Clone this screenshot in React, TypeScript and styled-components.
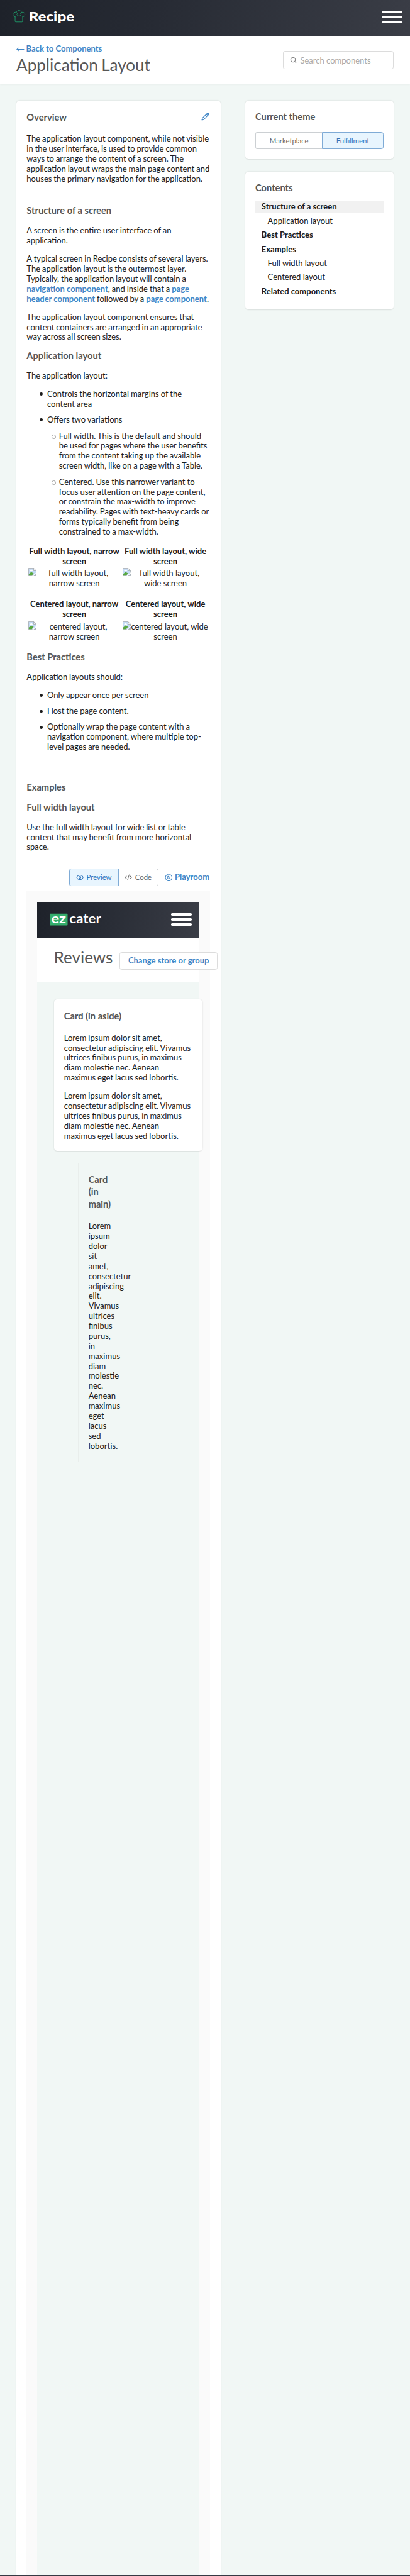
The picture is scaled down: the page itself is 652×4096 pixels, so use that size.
import React from "react";
import styled, { createGlobalStyle, css } from "styled-components";
import { Pencil, Search, Eye, CodeXml, CirclePlay, MoveLeft } from "lucide-react";

/* Converts design units to rem, so the whole page scales with the root font size. */
const u = (...values: number[]) => values.map((v) => `${v / 16}rem`).join(" ");

const color = {
  page: "#f1f7f5",
  text: "#1c1c1c",
  heading: "#575757",
  link: "#4187c7",
  line: "#e3e5e5",
  selectedBg: "#e8f5fe",
  selected: "#2f73b9",
};

const GlobalStyle = createGlobalStyle`
  html { font-size: 13.0315px; }
  * { box-sizing: border-box; }
  body {
    margin: 0;
    background: ${color.page};
    color: ${color.text};
    font-family: Lato, "Liberation Sans", sans-serif;
    font-size: ${u(16)};
    line-height: ${u(19.5)};
  }
`;

const Page = styled.div`
  height: 100vh;
  display: flex;
  flex-direction: column;
  overflow: hidden;
`;

const NavBar = styled.header`
  flex: none;
  height: ${u(70)};
  display: flex;
  align-items: center;
  justify-content: space-between;
  padding: ${u(0, 15, 0, 24)};
  background: linear-gradient(100deg, #1e222a 0%, #262a33 35%, #3a3d46 100%);
`;

const Brand = styled.svg`
  display: block;
  overflow: visible;
  height: ${u(34)};
  font-family: Lato, sans-serif;
`;

const Burger = styled.div`
  width: ${u(40)};
  height: ${u(25)};
  margin-top: ${u(-3)};
  display: flex;
  flex-direction: column;
  justify-content: space-between;
`;

const BurgerLine = styled.span`
  height: ${u(4.6)};
  border-radius: ${u(2)};
  background: #fff;
`;

const PageHeader = styled.div`
  flex: none;
  height: ${u(94)};
  padding: ${u(0, 32)};
  display: flex;
  justify-content: space-between;
  background: #fff;
  border-bottom: 1px solid ${color.line};
  box-shadow: 0 1px 2px rgba(0, 0, 0, 0.03);
`;

const BackLink = styled.a`
  display: flex;
  align-items: center;
  gap: ${u(3)};
  margin-top: ${u(16.3)};
  height: ${u(20)};
  font-weight: 700;
  white-space: nowrap;
  color: ${color.link};

  svg {
    width: ${u(16)};
    height: ${u(16)};
  }
`;

const Title = styled.h1`
  margin: 0;
  font-size: ${u(32)};
  line-height: ${u(40)};
  font-weight: 400;
  word-spacing: ${u(-1.5)};
  white-space: nowrap;
  color: ${color.heading};
`;

const SearchBox = styled.div`
  width: ${u(216)};
  height: ${u(35)};
  margin-top: ${u(30)};
  padding: ${u(2, 12, 0)};
  display: flex;
  align-items: center;
  gap: ${u(7)};
  border: 1px solid #dcdcdc;
  border-radius: ${u(4)};
  color: #aaa;

  svg {
    width: ${u(13.5)};
    height: ${u(13.5)};
    margin-top: ${u(-2)};
    color: #888;
  }
`;

const Content = styled.main`
  flex: 1;
  min-height: 0;
  display: flex;
  align-items: stretch;
  justify-content: space-between;
  padding: ${u(33, 32, 0)};
`;

const surface = css`
  background: #fff;
  border-radius: ${u(6)};
  box-shadow: 0 0 ${u(3)} rgba(0, 0, 0, 0.1), 0 ${u(1)} ${u(2)} rgba(0, 0, 0, 0.06);
`;

const Article = styled.article`
  ${surface}
  width: ${u(399)};
  border-radius: ${u(6, 6, 0, 0)};
  display: flex;
  flex-direction: column;
`;

const Section = styled.section<{ $height?: number }>`
  padding: ${u(20.5, 20, 0)};
  ${(p) =>
    p.$height
      ? css`
          flex: none;
          height: ${u(p.$height)};
          border-bottom: 1px solid ${color.line};
        `
      : css`
          flex: 1;
          min-height: 0;
          display: flex;
          flex-direction: column;
        `}
`;

const Sidebar = styled.aside`
  width: ${u(290)};
  display: flex;
  flex-direction: column;
  gap: ${u(24)};
`;

const SideCard = styled.section<{ $height: number }>`
  ${surface}
  height: ${(p) => u(p.$height)};
  padding: ${u(19.7, 20, 0)};
`;

const Heading = styled.h2<{ $top?: number; $bottom?: number }>`
  margin: ${(p) => u(p.$top ?? 0, 0, p.$bottom ?? 17)};
  font-size: ${u(18)};
  line-height: ${u(24.4)};
  font-weight: 700;
  color: ${color.heading};
`;

const HeadingRow = styled.div`
  display: flex;
  justify-content: space-between;
  margin-top: ${u(-0.6)};
  padding-right: ${u(2)};

  svg {
    width: ${u(16)};
    height: ${u(16)};
    margin-top: ${u(3)};
    color: ${color.link};
  }
`;

const Text = styled.p`
  margin: ${u(0, 0, 16)};
  word-spacing: ${u(-0.5)};
`;

const Link = styled.a`
  color: ${color.link};
  font-weight: 700;
  word-spacing: 0;
`;

const List = styled.ul<{ $nested?: boolean }>`
  margin: ${(p) => (p.$nested ? u(12, 0, 0) : 0)};
  padding: ${(p) => (p.$nested ? u(0, 0, 0, 23) : u(0, 0, 0, 40))};
  list-style: none;
  word-spacing: ${u(-0.4)};
`;

const Item = styled.li<{ $hollow?: boolean }>`
  position: relative;

  & + & {
    margin-top: ${u(11.7)};
  }

  &::before {
    content: "";
    position: absolute;
    left: ${u(-14.5)};
    top: ${u(6.7)};
    width: ${u(6)};
    height: ${u(6)};
    border-radius: 50%;
    ${(p) =>
      p.$hollow
        ? css`
            border: 1px solid #999;
          `
        : css`
            background: ${color.text};
          `}
  }
`;

const Figures = styled.div`
  display: grid;
  grid-template-columns: ${u(180, 168)};
  column-gap: ${u(4)};
  row-gap: ${u(21.3)};
  margin: ${u(18.3, 0, 0, 3)};
  text-align: center;
`;

const FigureTitle = styled.div`
  font-weight: 700;
  margin: ${u(0, -3, 4.5)};
`;

const MissingImage = styled.div`
  height: ${u(39)};
  white-space: nowrap;

  svg {
    float: left;
    width: ${u(16)};
    height: ${u(16)};
    margin-top: ${u(-1)};
  }
`;

const Segments = styled.div`
  display: flex;
  height: ${u(33.5)};
`;

const Segment = styled.button<{ $active?: boolean; $width: number }>`
  width: ${(p) => u(p.$width)};
  display: flex;
  align-items: center;
  justify-content: center;
  gap: ${u(5)};
  padding: 0;
  font: inherit;
  font-size: ${u(14)};
  color: ${(p) => (p.$active ? color.selected : "#666")};
  background: ${(p) => (p.$active ? color.selectedBg : "#fff")};
  border: 1px solid ${(p) => (p.$active ? "#7fabd6" : "#ccd0d3")};

  &:first-child {
    border-radius: ${u(4, 0, 0, 4)};
    ${(p) => !p.$active && "border-right: 0;"}
  }
  &:last-child {
    border-radius: ${u(0, 4, 4, 0)};
    ${(p) => !p.$active && "border-left: 0;"}
  }

  svg {
    width: ${u(15)};
    height: ${u(15)};
  }
`;

const TocItem = styled.a<{ $sub?: boolean; $current?: boolean }>`
  display: flex;
  align-items: center;
  height: ${u(22.5)};
  margin-bottom: ${u(5.05)};
  padding-top: ${u(1)};
  padding-left: ${(p) => u(p.$sub ? 24 : 12)};
  font-weight: ${(p) => (p.$sub ? 400 : 700)};
  background: ${(p) => (p.$current ? "#f1f1f1" : "transparent")};
`;

const Toolbar = styled.div`
  flex: none;
  display: flex;
  justify-content: flex-end;
  align-items: center;
  margin: ${u(16, 0, 10)};
  padding-right: ${u(2)};
`;

const PlayroomLink = styled.a`
  display: flex;
  align-items: center;
  gap: ${u(4.5)};
  margin-left: ${u(12.5)};
  font-weight: 700;
  color: ${color.link};

  svg {
    width: ${u(15.5)};
    height: ${u(15.5)};
  }
`;

const Frame = styled.div`
  flex: 1;
  min-height: 0;
  display: flex;
  flex-direction: column;
  width: ${u(358)};
  padding: ${u(22, 20, 0, 21)};
  background: #fafafa;
`;

const Preview = styled.div`
  flex: 1;
  min-height: 0;
  display: flex;
  flex-direction: column;
  width: ${u(316)};
  background: ${color.page};
`;

const PreviewHeader = styled.div`
  flex: none;
  height: ${u(86.5)};
  padding: ${u(26, 0, 0, 32)};
  display: flex;
  gap: ${u(13)};
  background: #fff;
  border-bottom: 1px solid ${color.line};
`;

const PreviewTitle = styled(Title)`
  width: ${u(116)};
  line-height: ${u(24)};
`;

const OutlineButton = styled.button`
  flex: none;
  width: ${u(192)};
  height: ${u(34.5)};
  margin-top: ${u(1.3)};
  padding: 0;
  font: inherit;
  font-weight: 700;
  color: ${color.link};
  background: #fff;
  border: 1px solid #dcdcdc;
  border-radius: ${u(4)};
`;

const AsideCard = styled.section`
  ${surface}
  flex: none;
  width: ${u(290)};
  height: ${u(295.5)};
  margin: ${u(33.5, 0, 0, 32)};
  padding: ${u(20, 20, 0)};
`;

const MainCard = styled.section`
  flex: none;
  width: ${u(40)};
  height: ${u(583.5)};
  margin: ${u(24.5, 0, 0, 79.5)};
  padding: ${u(19, 19, 0)};
  border-left: 1px solid #e9eeec;
`;

const Footer = styled.footer`
  flex: none;
  height: 1px;
  background: #363a44;
`;

const RecipeLogo = () => (
  <Brand viewBox="0 0 124 34" role="img" aria-label="Recipe">
    <g transform="translate(0 -1.7)" fill="none" stroke="#1f9565" strokeWidth="1.2" strokeLinejoin="round" strokeLinecap="round">
      <path d="M5 14.5v10.2a1.3 1.3 0 0 0 1.3 1.3h12a1.3 1.3 0 0 0 1.3-1.3V14.5" />
      <path d="M5 16.2C2.5 15.9.8 14 .8 11.6.8 9 2.8 7 5.3 7c.8 0 1.5.2 2.100.5C8.200 5 10 3.700 12.500 3.700s4.300 1.300 5.100 3.800c.6-.3 1.300-.5 2.100-.5 2.500 0 4.500 2 4.500 4.600 0 2.400-1.700 4.300-4.300 4.600" />
      <path d="M7.400 7.500c1.300.6 1.900 1.500 2 2.600M17.600 7.500c-1.300.6-2 1.500-2.100 2.600M7.800 11c1 2.500 2.600 3.500 4.700 3.500s3.800-1 4.800-3.500" />
    </g>
    <text x="31.5" y="23.2" fill="#fff" fontSize="26.5" fontWeight="900" textLength="89" lengthAdjust="spacingAndGlyphs">
      Recipe
    </text>
  </Brand>
);

const EzCaterLogo = () => (
  <Brand viewBox="0 0 124 34" role="img" aria-label="ezcater">
    <rect x="0" y="4.5" width="35" height="23" rx="1.5" fill="#34ad6c" />
    <text x="3" y="22.8" fill="#fff" fontSize="26" fontWeight="700" textLength="29" lengthAdjust="spacingAndGlyphs">
      ez
    </text>
    <text x="38.5" y="22.8" fill="#fff" fontSize="25.5" fontWeight="600" textLength="62" lengthAdjust="spacingAndGlyphs">
      cater
    </text>
  </Brand>
);

const BrokenImage = () => (
  <svg viewBox="0 0 16 16" aria-hidden="true">
    <path d="M.5.5h10l5 5v10H.5z" fill="#c5dbf5" stroke="#a3a9ae" />
    <path d="M1 12l4.500-4 5 2.500L7 15H1z" fill="#58a83f" />
    <path d="M3 5.500c0-1 1-1.500 1.800-1.200C5.500 3 7.500 3.300 7.700 4.700c1 0 1.200 1.300.3 1.300H3.400z" fill="#fff" />
    <path d="M10.500.5v5h5z" fill="#f2f2f2" stroke="#a3a9ae" />
    <path d="M16 8.500L7.500 16H10l6-5.200z" fill="#fff" />
    <path d="M11 15.500l4.500-4v4z" fill="#a9b2b8" />
  </svg>
);

const Menu = () => (
  <Burger>
    <BurgerLine />
    <BurgerLine />
    <BurgerLine />
  </Burger>
);

const figures = [
  { title: ["Full width layout, narrow", "screen"], alt: ["full width layout,", "narrow screen"] },
  { title: ["Full width layout, wide", "screen"], alt: ["full width layout,", "wide screen"] },
  { title: ["Centered layout, narrow", "screen"], alt: ["centered layout,", "narrow screen"] },
  { title: ["Centered layout, wide", "screen"], alt: ["centered layout, wide", "screen"] },
];

const contents = [
  { label: "Structure of a screen", current: true },
  { label: "Application layout", sub: true },
  { label: "Best Practices" },
  { label: "Examples" },
  { label: "Full width layout", sub: true },
  { label: "Centered layout", sub: true },
  { label: "Related components" },
];

const lorem =
  "Lorem ipsum dolor sit amet, consectetur adipiscing elit. Vivamus ultrices finibus purus, in maximus diam molestie nec. Aenean maximus eget lacus sed lobortis.";

export default function App() {
  return (
    <Page>
      <GlobalStyle />
      <NavBar>
        <RecipeLogo />
        <Menu />
      </NavBar>
      <PageHeader>
        <div>
          <BackLink>
            <MoveLeft strokeWidth={2.2} />
            Back to Components
          </BackLink>
          <Title>Application Layout</Title>
        </div>
        <SearchBox>
          <Search strokeWidth={2.8} />
          Search components
        </SearchBox>
      </PageHeader>

      <Content>
        <Article>
          <Section $height={182}>
            <HeadingRow>
              <Heading $bottom={20.6}>Overview</Heading>
              <Pencil strokeWidth={2.2} />
            </HeadingRow>
            <Text>
              The application layout component, while not visible in the user interface, is used to provide common ways
              to arrange the content of a screen. The application layout wraps the main page content and houses the
              primary navigation for the application.
            </Text>
          </Section>

          <Section $height={1125}>
            <Heading $bottom={17.5}>Structure of a screen</Heading>
            <Text>
              A screen is the entire user interface of an
              <br />
              application.
            </Text>
            <Text>
              A typical screen in Recipe consists of several layers. The application layout is the outermost layer.
              Typically, the application layout will contain a <Link>navigation component</Link>, and inside that a{" "}
              <Link>page header component</Link> followed by a <Link>page component</Link>.
            </Text>
            <Text>
              The application layout component ensures that content containers are arranged in an appropriate way across
              all screen sizes.
            </Text>
            <Heading $top={-1.5}>Application layout</Heading>
            <Text>The application layout:</Text>
            <List>
              <Item>Controls the horizontal margins of the content area</Item>
              <Item>
                Offers two variations
                <List $nested>
                  <Item $hollow>
                    Full width. This is the default and should be used for pages where the user benefits from the
                    content taking up the available screen width, like on a page with a Table.
                  </Item>
                  <Item $hollow>
                    Centered. Use this narrower variant to focus user attention on the page content, or constrain the
                    max-width to improve readability. Pages with text-heavy cards or forms typically benefit from being
                    constrained to a max-width.
                  </Item>
                </List>
              </Item>
            </List>
            <Figures>
              {figures.map((f) => (
                <div key={f.title[0]}>
                  <FigureTitle>
                    {f.title[0]}
                    <br />
                    {f.title[1]}
                  </FigureTitle>
                  <MissingImage>
                    <BrokenImage />
                    {f.alt[0]}
                    <br />
                    {f.alt[1]}
                  </MissingImage>
                </div>
              ))}
            </Figures>
            <Heading $top={18}>Best Practices</Heading>
            <Text>Application layouts should:</Text>
            <List>
              <Item>Only appear once per screen</Item>
              <Item>Host the page content.</Item>
              <Item>
                Optionally wrap the page content with a navigation component, where multiple top-level pages are needed.
              </Item>
            </List>
          </Section>

          <Section>
            <Heading $bottom={15.6}>Examples</Heading>
            <Heading $bottom={16.8}>Full width layout</Heading>
            <Text>Use the full width layout for wide list or table content that may benefit from more horizontal space.</Text>
            <Toolbar>
              <Segments>
                <Segment $active $width={97}>
                  <Eye />
                  Preview
                </Segment>
                <Segment $width={77}>
                  <CodeXml />
                  Code
                </Segment>
              </Segments>
              <PlayroomLink>
                <CirclePlay />
                Playroom
              </PlayroomLink>
            </Toolbar>
            <Frame>
              <Preview>
                <NavBar>
                  <EzCaterLogo />
                  <Menu />
                </NavBar>
                <PreviewHeader>
                  <PreviewTitle as="h3">Reviews</PreviewTitle>
                  <OutlineButton>Change store or group</OutlineButton>
                </PreviewHeader>
                <AsideCard>
                  <Heading $bottom={21}>Card (in aside)</Heading>
                  <Text>{lorem}</Text>
                  <Text>{lorem}</Text>
                </AsideCard>
                <MainCard>
                  <Heading $bottom={21}>Card (in main)</Heading>
                  <Text>{lorem}</Text>
                </MainCard>
              </Preview>
            </Frame>
          </Section>
        </Article>

        <Sidebar>
          <SideCard $height={114}>
            <Heading>Current theme</Heading>
            <Segments>
              <Segment $width={130.5}>Marketplace</Segment>
              <Segment $active $width={119.5}>
                Fulfillment
              </Segment>
            </Segments>
          </SideCard>
          <SideCard $height={269}>
            <Heading $bottom={13.5}>Contents</Heading>
            {contents.map((c) => (
              <TocItem key={c.label} $sub={c.sub} $current={c.current}>
                {c.label}
              </TocItem>
            ))}
          </SideCard>
        </Sidebar>
      </Content>
      <Footer />
    </Page>
  );
}
